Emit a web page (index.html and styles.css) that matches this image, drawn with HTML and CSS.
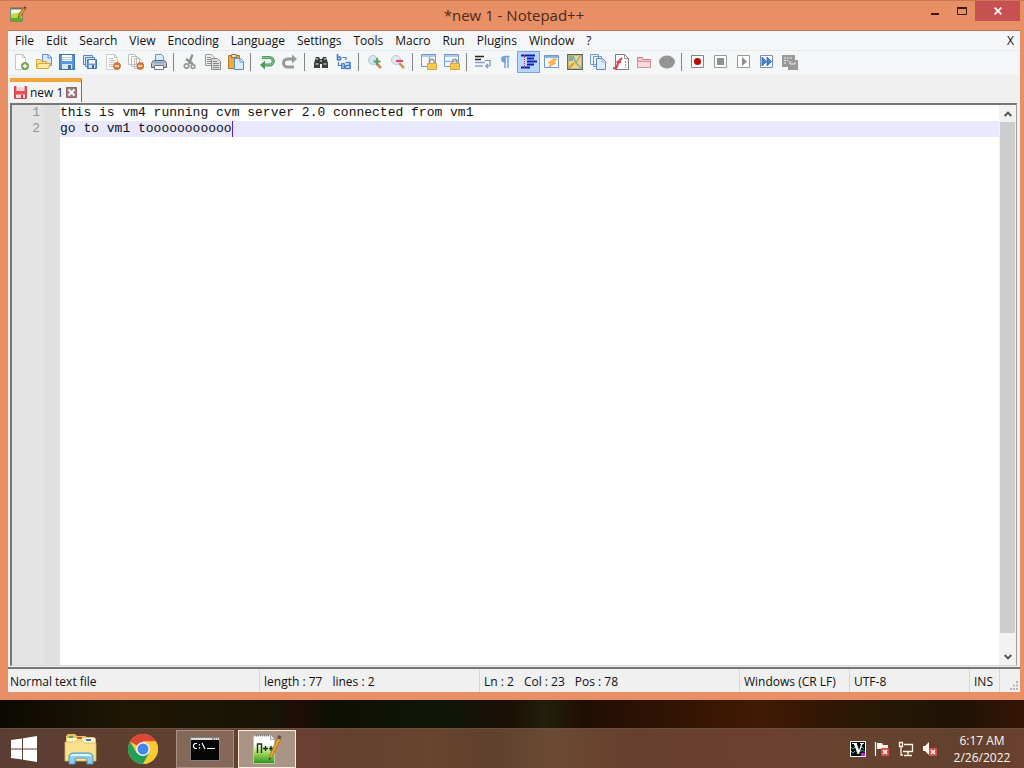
FILE: index.html
```
<!DOCTYPE html>
<html lang="en">
<head>
    <meta charset="UTF-8">
    <meta name="viewport" content="width=device-width, initial-scale=1.0">
    <title>*new 1 - Notepad++</title>
    <link rel="stylesheet" href="styles.css">
</head>
<body>
    <main class="window">
        <header class="titlebar">
            <div class="title-icon">
                <svg width="18" height="18" viewBox="0 0 18 18"><path d="M1.500 2.500h12v13h-12z" fill="#f4f8e8" stroke="#7d8870"/><path d="M2 8l11-2v9H2z" fill="#b5df4a"/><path d="M2 12h11v3H2z" fill="#5fae24"/><path d="M2 1v3M4 1v3M6 1v3M8 1v3M10 1v3M12 1v3" stroke="#555" stroke-width=".8"/><path d="M9 12l1-4 5-7 2 1-5 8z" fill="#dca32e" stroke="#7b4b18" stroke-width=".7"/><path d="M14.500 2l1-1.500 2 1-1 1.500z" fill="#6e3030"/></svg>
            </div>
            <h1>*new 1 - Notepad++</h1>
            <div class="window-buttons">
                <button type="button" title="Minimize"><svg width="10" height="10" viewBox="0 0 10 10"><path d="M1 7h8v2H1z" fill="#3a1a0c"/></svg></button>
                <button type="button" title="Maximize"><svg width="10" height="8" viewBox="0 0 10 8"><path d="M.5 1h9v6.500h-9z" fill="none" stroke="#3a1a0c"/><path d="M0 0h10v2H0z" fill="#3a1a0c"/></svg></button>
                <button type="button" class="close" title="Close"><svg width="8" height="8" viewBox="0 0 8 8"><path d="M.7.7l6.600 6.600M7.300.7L.7 7.300" stroke="#fff" stroke-width="1.700"/></svg></button>
            </div>
        </header>

        <div class="client">
            <nav class="menubar">
                <button type="button">File</button>
                <button type="button">Edit</button>
                <button type="button">Search</button>
                <button type="button">View</button>
                <button type="button">Encoding</button>
                <button type="button">Language</button>
                <button type="button">Settings</button>
                <button type="button">Tools</button>
                <button type="button">Macro</button>
                <button type="button">Run</button>
                <button type="button">Plugins</button>
                <button type="button">Window</button>
                <button type="button">?</button>
                <button type="button" class="menu-close">X</button>
            </nav>

            <div class="toolbar">
                <button type="button" title="New"><svg viewBox="0 0 16 16"><path d="M2.500.5h7l3 3v12h-10z" fill="#fff" stroke="#c6c6c6"/><path d="M9.500.5v3h3" fill="none" stroke="#c6c6c6"/><circle cx="12" cy="12" r="3.600" fill="#7fa650" stroke="#5c7d3a" stroke-width=".7"/><path d="M12 9.800v4.400M9.800 12h4.400" stroke="#fff" stroke-width="1.300"/></svg></button>
                <button type="button" title="Open"><svg viewBox="0 0 16 16"><path d="M6.500.5h6l3 3v8h-9z" fill="#d8e8fc" stroke="#6a92c8"/><path d="M12 .5v3.500h3.500" fill="none" stroke="#6a92c8"/><path d="M.5 14.500v-9h4l1 2h5v3" fill="#fbe08e" stroke="#d8a53a"/><path d="M.5 14.500l2-5h12l-2 5z" fill="#fde9a0" stroke="#d8a53a"/></svg></button>
                <button type="button" title="Save"><svg viewBox="0 0 16 16"><path d="M.7.7h14.600v14.600H.7z" fill="#5a9be0" stroke="#3f74bd" stroke-width="1.400"/><path d="M3 1h10v6H3z" fill="#fff"/><path d="M3 3.500h10M3 5.500h10" stroke="#b8d0ee"/><path d="M3 10h10v5H3z" fill="#d6e6e8"/><path d="M9 11h3v4H9z" fill="#4370a8"/></svg></button>
                <button type="button" title="Save All"><svg viewBox="0 0 16 16"><path d="M1.500 1.500h9v9h-9z" fill="#d3e3f8" stroke="#5c85be"/><path d="M3.500 3.500h9v9h-9z" fill="#d3e3f8" stroke="#5c85be"/><path d="M5.500 5.500h9v9h-9z" fill="#6e9fdc" stroke="#4f78b2"/><path d="M7 6h6v3.500H7z" fill="#fff"/><path d="M7 11h6v3H7z" fill="#d9e8ea"/><path d="M10 11h2v3h-2z" fill="#4069a0"/></svg></button>
                <button type="button" title="Close"><svg viewBox="0 0 16 16"><path d="M1.500.5h8l3 3v12h-11z" fill="#fff" stroke="#cfcfcf"/><path d="M9.500.5v3h3M4 4.500h4M4 6.500h6M4 8.500h5M4 10.500h4M4 12.500h4" fill="none" stroke="#bdbdbd"/><circle cx="12" cy="12" r="3.500" fill="#e67a2c" stroke="#b85a1a" stroke-width=".7"/><path d="M10 12h4" stroke="#fff" stroke-width="1.300"/></svg></button>
                <button type="button" title="Close All"><svg viewBox="0 0 16 16"><path d="M.5.5h6l2 2v8h-8zM3.500 2.500h6l2 2v8h-8zM6.500 4.500h5l3 3v7h-8z" fill="#fff" stroke="#bdbdbd"/><circle cx="12.300" cy="12" r="3.400" fill="#e67a2c" stroke="#b85a1a" stroke-width=".7"/><path d="M10.300 12h4" stroke="#fff" stroke-width="1.300"/></svg></button>
                <button type="button" title="Print"><svg viewBox="0 0 16 16"><path d="M4.500.5h6l2 2v6h-8z" fill="#dceaff" stroke="#6f8fc8"/><path d="M1.500 7.500l2-1h9l2 1 1 2v4H.5v-4z" fill="#bfc3cc" stroke="#5e6472"/><path d="M3 7.500h10v2H3z" fill="#88a8e0"/><path d="M3.500 11.500h9v4h-9z" fill="#fff" stroke="#6e7482"/></svg></button>
                <span class="separator"></span>
                <button type="button" title="Cut"><svg viewBox="0 0 16 16"><path d="M10.500.5L7 10M4 5l7 5" stroke="#8e8e8e" stroke-width="2.200"/><circle cx="4.500" cy="12" r="2.200" fill="none" stroke="#9a9a9a" stroke-width="1.800"/><circle cx="11" cy="12.500" r="1.900" fill="none" stroke="#9a9a9a" stroke-width="1.600"/></svg></button>
                <button type="button" title="Copy"><svg viewBox="0 0 16 16"><path d="M.5.5h6l3 3v8h-9z" fill="#eee" stroke="#9a9a9a"/><path d="M2 3.500h4M2 5.500h5M2 7.500h5M2 9.500h5" stroke="#8f8f8f"/><path d="M6.500 4.500h6l3 3v8h-9z" fill="#ddd" stroke="#8a8a8a"/><path d="M8 7.500h4M8 9.500h6M8 11.500h6M8 13.500h6" stroke="#8a8a8a"/></svg></button>
                <button type="button" title="Paste"><svg viewBox="0 0 16 16"><path d="M.5 1.500h11v13H.5z" fill="#f0a93c" stroke="#bb7420"/><path d="M3.500.5h5v3h-5z" fill="#ddd" stroke="#8d7650"/><path d="M6.500 4.500h6l3 3v8h-9z" fill="#dcecff" stroke="#5f8dcc"/><path d="M12 4.500v3.500h3.500" fill="#fff" stroke="#5f8dcc"/></svg></button>
                <span class="separator"></span>
                <button type="button" title="Undo"><svg viewBox="0 0 16 16"><path d="M3 3.500h7.500a3.500 3.500 0 0 1 0 7.500H5" fill="none" stroke="#4d9a58" stroke-width="3"/><path d="M3 3.500h7.500a3.500 3.500 0 0 1 0 7.500H5" fill="none" stroke="#8cc894"/><path d="M6 6.500v9L1 11z" fill="#4d9a58"/></svg></button>
                <button type="button" title="Redo"><svg viewBox="0 0 16 16"><path d="M11 5H5.500a3.500 3.500 0 0 0 0 8H12" fill="none" stroke="#999" stroke-width="3"/><path d="M10 .5v9L15 5z" fill="#999"/></svg></button>
                <span class="separator"></span>
                <button type="button" title="Find"><svg viewBox="0 0 16 16"><path d="M3 3h3l1 2h2l1-2h3l2 6v5H9v-4H7v4H1V9z" fill="#3c3c3c"/><path d="M3 5h2M11 5h2M2.500 10h3M10.500 10h3M7 7h2" stroke="#b9b9b9" stroke-width="1.500"/></svg></button>
                <button type="button" title="Replace"><svg viewBox="0 0 16 16"><g fill="none" stroke="#4a7fd0" stroke-width="1.700"><path d="M1.500 0v6M1.500 3.500c4-2 5 3 0 2.500M9.500 8.500h4.500v6H9.500c-1.500-3 1-3.500 4-3"/></g><path d="M6.500 3.500H10V6M2.500 8v3.500H5" fill="none" stroke="#4a7fd0" stroke-width="1.200"/><path d="M5.500 9.500h3v5h-3z" fill="#8bb2e8" stroke="#4a7fd0"/></svg></button>
                <span class="separator"></span>
                <button type="button" title="Zoom In"><svg viewBox="0 0 16 16"><path d="M9 9l5 5" stroke="#c98b4a" stroke-width="2.600"/><circle cx="6" cy="6" r="4.500" fill="#d5e7ec" stroke="#b4c8d0"/><path d="M10 4v7M6.500 7.500h7" stroke="#5a9f60" stroke-width="2.200"/></svg></button>
                <button type="button" title="Zoom Out"><svg viewBox="0 0 16 16"><path d="M9 9l5 5" stroke="#c9965f" stroke-width="2.600"/><circle cx="6" cy="6" r="4.500" fill="#dde8f3" stroke="#bccbd9"/><path d="M6 7h7" stroke="#dc4860" stroke-width="2.200"/></svg></button>
                <span class="separator"></span>
                <button type="button" title="Synchronize Vertical Scrolling"><svg viewBox="0 0 16 16"><path d="M.5.5h14v12H.5z" fill="#f4f8ff" stroke="#7898c6"/><path d="M1 2h13M8.500 2v10" stroke="#9bb6dc" stroke-width="1.500"/><path d="M8.500 9V7.500c0-3 4.500-3 4.500 0V9" fill="none" stroke="#999" stroke-width="1.500"/><path d="M6.500 9.500h9v6h-9z" fill="#fbc84e" stroke="#dba545"/></svg></button>
                <button type="button" title="Synchronize Horizontal Scrolling"><svg viewBox="0 0 16 16"><path d="M.5.5h14v12H.5z" fill="#f4f8ff" stroke="#7898c6"/><path d="M1 2h13M1 7.500h13" stroke="#9bb6dc" stroke-width="1.500"/><path d="M8.500 9V7.500c0-3 4.500-3 4.500 0V9" fill="none" stroke="#999" stroke-width="1.500"/><path d="M6.500 9.500h9v6h-9z" fill="#fbc84e" stroke="#dba545"/></svg></button>
                <span class="separator"></span>
                <button type="button" title="Word wrap"><svg viewBox="0 0 16 16"><path d="M0 2.500h9M0 5.500h6" stroke="#222" stroke-width="1.300"/><path d="M0 8.500h10M0 12h8" stroke="#8aa4cc" stroke-width="1.500"/><path d="M10 6.500h5V12h-4M13 9.800L10.800 12l2.200 2.200" fill="none" stroke="#7792c0" stroke-width="1.200"/></svg></button>
                <button type="button" title="Show All Characters"><svg viewBox="0 0 16 16"><path d="M6.500 2.500h5M7 2v12M10 2v12" stroke="#72a0dc" stroke-width="1.500"/><path d="M7.500 2H6C2 2 2 8.500 6 8.500h1.500z" fill="#72a0dc"/></svg></button>
                <button type="button" class="pressed" title="Show Indent Guide"><svg viewBox="0 0 16 16"><path d="M0 1.500h14M6 4.500h7M6 7.500h10M6 10.500h7M0 13.500h9" stroke="#0b1dba" stroke-width="1.800"/><path d="M3.500 1v14" stroke="#c43848" stroke-dasharray="1 1"/></svg></button>
                <button type="button" title="User Defined Language"><svg viewBox="0 0 16 16"><path d="M.5 1.500h14v12H.5z" fill="#f5f9ff" stroke="#7297c8"/><path d="M1 3h13" stroke="#8fb0de" stroke-width="2"/><path d="M9 5l-5 4h3l-2 4 7-4H9l4-4z" fill="#ffbd3b" stroke="#e8942c" stroke-width=".6"/></svg></button>
                <button type="button" title="Document Map"><svg viewBox="0 0 16 16"><path d="M.7.7h14.600v14.600H.7z" fill="#efd680" stroke="#555f68" stroke-width="1.200"/><path d="M2 2h4v5H2z" fill="#84ae9a"/><path d="M6 2l3 7 5 5M9 9l4-7" stroke="#8aa8a4" stroke-width="1.500" fill="none"/><path d="M2 14l5-5" stroke="#d39e34" stroke-width="2"/></svg></button>
                <button type="button" title="Document List"><svg viewBox="0 0 16 16"><path d="M.5.5h8v10h-8zM3.500 2.500h8v10h-8z" fill="#edf4fe" stroke="#7298cd"/><path d="M6.500 4.500h6l3 3v8h-9z" fill="#e1edfe" stroke="#5c8acb"/><path d="M12 4.500V8h3.500" fill="none" stroke="#8db0df"/></svg></button>
                <button type="button" title="Function List"><svg viewBox="0 0 16 16"><path d="M2.500.5h9l4 4v11h-13z" fill="#fff" stroke="#7c7c7c"/><path d="M11.500 1v3.500H15" fill="none" stroke="#999"/><path d="M0 14l3 .5L6 7l3-3M3.500 8h4.500" fill="none" stroke="#d84459" stroke-width="2.200"/><path d="M12.500 7v7" stroke="#999" stroke-dasharray="2 1"/></svg></button>
                <button type="button" title="Folder as Workspace"><svg viewBox="0 0 16 16"><path d="M1.500 13.500v-10h5l1 2h7v8z" fill="#f3c6cc" stroke="#cf7d87"/><path d="M1.500 13.500v-6h13v6z" fill="#f9dade" stroke="#d6929b"/></svg></button>
                <button type="button" title="Monitoring"><svg viewBox="0 0 16 16"><ellipse cx="8" cy="8" rx="8" ry="6.500" fill="#959595"/><path d="M4 6h1M11 6h1" stroke="#777" stroke-width="1.500"/></svg></button>
                <span class="separator"></span>
                <button type="button" title="Start Recording"><svg viewBox="0 0 16 16"><path d="M1.500 1.500h12v12h-12z" fill="#fff" stroke="#858585"/><circle cx="7.500" cy="7.500" r="3.500" fill="#bd0606"/></svg></button>
                <button type="button" title="Stop Recording"><svg viewBox="0 0 16 16"><path d="M1.500 1.500h12v12h-12z" fill="#fff" stroke="#999"/><path d="M4 4h7v7H4z" fill="#8f8f8f"/></svg></button>
                <button type="button" title="Playback"><svg viewBox="0 0 16 16"><path d="M1.500 1.500h12v12h-12z" fill="#fff" stroke="#999"/><path d="M6 3l5 4.500L6 12z" fill="#8f8f8f"/></svg></button>
                <button type="button" title="Run a Macro Multiple Times"><svg viewBox="0 0 16 16"><path d="M1.500 1.500h12v12h-12z" fill="#fff" stroke="#7890ab"/><path d="M3 3l4.500 4.500L3 12zM8 3l4.500 4.500L8 12z" fill="#4285da" stroke="#2d62b0" stroke-width=".8"/></svg></button>
                <button type="button" title="Save Current Recorded Macro"><svg viewBox="0 0 16 16"><path d="M0 1h13v12H0z" fill="#999"/><path d="M2 4h9M2 6.500h5M2 9h3" stroke="#eee" stroke-dasharray="2 1"/><path d="M6 6h10v10H6z" fill="#999"/><path d="M8 7v3h5V8" fill="none" stroke="#eee"/></svg></button>
            </div>

            <div class="tabs">
                <div class="tab">
                    <svg width="13" height="13" viewBox="0 0 13 13"><path d="M.5.5h12v12H.5z" fill="#ee4a54" stroke="#d04550"/><path d="M2.500 0h8v5h-8z" fill="#fff"/><path d="M3.500 2h6M3.500 4h6" stroke="#e5a9ad"/><path d="M2 8.500h9V12H2z" fill="#f4d7d8"/><path d="M7 9h2v3H7z" fill="#cc3c45"/></svg>
                    <span>new 1</span>
                    <button type="button" title="Close tab"><svg width="11" height="11" viewBox="0 0 11 11"><path d="M.5.5h10v10H.5z" fill="#9a7c80" stroke="#8b6467"/><path d="M2.500 2.500l6 6M8.500 2.500l-6 6" stroke="#fff" stroke-width="2"/></svg></button>
                </div>
            </div>

            <div class="editor">
                <ol class="line-numbers">
                    <li>1</li>
                    <li>2</li>
                </ol>
                <div class="fold-margin"></div>
                <div class="text-area">
                    <textarea aria-label="Document" spellcheck="false">this is vm4 running cvm server 2.0 connected from vm1
go to vm1 tooooooooooo</textarea>
                    <span class="caret"></span>
                </div>
                <div class="scrollbar">
                    <button type="button" title="Scroll up"><svg width="8" height="6" viewBox="0 0 8 6"><path d="M.7 5L4 1.700 7.300 5" fill="none" stroke="#505050" stroke-width="1.900"/></svg></button>
                    <div class="track"><div class="thumb"></div></div>
                    <button type="button" title="Scroll down"><svg width="8" height="6" viewBox="0 0 8 6"><path d="M.7 1L4 4.300 7.300 1" fill="none" stroke="#505050" stroke-width="1.900"/></svg></button>
                </div>
            </div>

            <footer class="statusbar">
                <div class="doc-type">Normal text file</div>
                <div class="doc-size"><span>length : 77</span><span>lines : 2</span></div>
                <div class="cursor-pos"><span>Ln : 2</span><span>Col : 23</span><span>Pos : 78</span></div>
                <div class="eol">Windows (CR LF)</div>
                <div class="encoding">UTF-8</div>
                <div class="typing-mode">INS</div>
                <div class="grip"><svg width="10" height="10" viewBox="0 0 10 10"><path d="M7 0h2v2H7zM4 3.500h2v2H4zM7 3.500h2v2H7zM1 7h2v2H1zM4 7h2v2H4zM7 7h2v2H7z" fill="#b5b5b5"/></svg></div>
            </footer>
        </div>
    </main>

    <footer class="taskbar">
        <button type="button" class="start" title="Start"><svg width="26" height="26" viewBox="0 0 26 26"><path d="M0 4l11-1.600V12.500H0zM12 2.200L26 0v12.500H12zM0 13.500h11v10.100L0 22zM12 13.500h14V26l-14-2.200z" fill="#fff"/></svg></button>
        <button type="button" class="task" title="File Explorer">
            <svg width="34" height="32" viewBox="0 0 34 32"><path d="M2 3l2-2h7l2 2h8l2 1h7l2 2v22H2z" fill="#e8c564"/><path d="M3 5h28v5H3z" fill="#fff4c8"/><path d="M5 3h4v2H5z" fill="#59a548"/><path d="M13 4h5v2h-5z" fill="#d34c35"/><path d="M22 6h5v2h-5z" fill="#367fc4"/><path d="M1 9h10l2-2h5l2 3h12v18H1z" fill="#f8e28e" stroke="#d9b759" stroke-width=".8"/><path d="M5 31v-7q0-4 5-4h14q5 0 5 4v7h-6v-4q0-2-2-2h-8q-2 0-2 2v4z" fill="#91cdef" stroke="#4b98c8"/><path d="M7 23q1-1 4-1h12q3 0 4 1" fill="none" stroke="#dff5ff" stroke-width="2"/></svg>
        </button>
        <button type="button" class="task" title="Google Chrome">
            <svg width="30" height="30" viewBox="0 0 30 30"><circle cx="15" cy="15" r="15" fill="#fbc934"/><path d="M15 15L2 7.500A15 15 0 0 1 28 7.500H15z" fill="#dd4536"/><path d="M2 7.500L8.500 18.750 15 22l6.500-3.250L15 30A15 15 0 0 1 2 7.500z" fill="#239d58"/><path d="M21.500 18.750L15 30A15 15 0 0 0 28 7.500H15z" fill="#fbc934"/><circle cx="15" cy="15" r="7" fill="#f4f4f4"/><circle cx="15" cy="15" r="5.500" fill="#4384ef"/></svg>
        </button>
        <button type="button" class="task running" title="Command Prompt">
            <svg width="30" height="24" viewBox="0 0 30 24"><path d="M.5.5h29v23H.5z" fill="#050505" stroke="#818181"/><path d="M1 1h28v2H1z" fill="#ddd"/><path d="M22 2h2M25 2h1M27 2h1" stroke="#555"/><path d="M7 6.500H5L3.500 8v2L5 11.500h2M9.500 7v1.500M9.500 10v1.500M12 6l3 6M17 11.500h8" fill="none" stroke="#fff" stroke-width="1.200"/></svg>
        </button>
        <button type="button" class="task running active" title="Notepad++">
            <svg width="32" height="32" viewBox="0 0 32 32"><defs><linearGradient id="page" x1="0" y1="0" x2="0" y2="1"><stop offset=".3" stop-color="#fff"/><stop offset=".6" stop-color="#a7df62"/><stop offset="1" stop-color="#299119"/></linearGradient></defs><path d="M2.500 2.500h17l4 4v24h-21z" fill="url(#page)" stroke="#b8ccab"/><path d="M19.500 2.500v4h4" fill="#eee" stroke="#aaa"/><path d="M3 2.500h16" stroke="#777" stroke-width="2" stroke-dasharray="1 1"/><path d="M6.500 20v-9h4v9M12 15.500h5M14.500 13v5M18 15.500h4M20 13v5" fill="none" stroke="#202820" stroke-width="1.400"/><path d="M18 27l1-5L27 4l3 2-9 18z" fill="#e3a235" stroke="#a86d20" stroke-width=".8"/><path d="M26 5l1.500-3 3 1.500L29 6.500z" fill="#744d42"/><path d="M18 27l.5-2.500 2 1z" fill="#333"/></svg>
        </button>
        <div class="tray">
            <button type="button" title="VNC Server"><svg viewBox="0 0 16 16"><path d="M.5.5h15v15H.5z" fill="#080808" stroke="#fff"/><path d="M1 6l2 2 2-2M1 10l2 2 2-2M10 8l2-2 2 2M10 11l2-2 3 2" fill="none" stroke="#28b99c"/><path d="M2 2.500h5M10 2.500h4" stroke="#fff"/><path d="M3.500 2h3l2.500 7 2.500-7H13L9 13H7.500z" fill="#fff"/><path d="M11 12h4v3h-4z" fill="#d31cec"/></svg></button>
            <button type="button" title="Action Center"><svg viewBox="0 0 16 16"><path d="M1.500 1v14" stroke="#fff" stroke-width="1.200"/><path d="M3 2h5l1 2h5v6H8L7 8H3z" fill="#fff2e9"/><path d="M7 7h8v8H7z" fill="#d94c4c"/><path d="M9 9l4 4M13 9l-4 4" stroke="#fff" stroke-width="1.600"/></svg></button>
            <button type="button" title="Network"><svg viewBox="0 0 16 16"><path d="M6 3.500h8.500v7H5M10 11v3M6 14.500h8M3 6v8h2" fill="none" stroke="#fff4e5" stroke-width="1.300"/><path d="M1.500 1.500h3v4h-3z" fill="none" stroke="#fff4e5" stroke-width="1.300"/></svg></button>
            <button type="button" title="Volume"><svg viewBox="0 0 16 16"><path d="M1 5h2l4-4v13l-4-4H1z" fill="#fff4e9"/><path d="M7 7h8v8H7z" fill="#d94c4c"/><path d="M9 9l4 4M13 9l-4 4" stroke="#fff" stroke-width="1.600"/></svg></button>
        </div>
        <div class="clock">
            <time>6:17 AM</time>
            <time>2/26/2022</time>
        </div>
    </footer>
</body>
</html>
```

FILE: styles.css
```
* {
    box-sizing: border-box;
}

body {
    margin: 0;
    height: 100vh;
    display: flex;
    flex-direction: column;
    overflow: hidden;
    font-family: "Open Sans", "Segoe UI", sans-serif;
    font-size: 12px;
    color: #111;
    background: linear-gradient(90deg, #0c0903 0%, #1e1703 12%, #171404 27%, #210c06 29%, #0f1005 32%, #10150a 44%, #1c1005 50%, #20200a 53%, #210e03 57%, #401a04 74%, #331704 80%, #241704 87%, #201305 94%, #361404 100%);
}

button {
    margin: 0;
    padding: 0;
    border: none;
    background: none;
    color: inherit;
    font: inherit;
    display: flex;
    align-items: center;
    justify-content: center;
}

svg {
    display: block;
}

/* Window */
.window {
    flex: 1;
    min-height: 0;
    margin-bottom: 28px;
    padding: 0 4px 8px 8px;
    display: flex;
    flex-direction: column;
    background-color: #e88f66;
    border-top: 1px solid #c87855;
}

.titlebar {
    height: 29px;
    display: grid;
    grid-template-columns: 1fr auto 1fr;
}

.title-icon {
    padding: 5px 0 0 1px;
}

h1 {
    margin: 0;
    font-size: 15px;
    font-weight: normal;
    line-height: 29px;
    color: #4d2a1b;
}

.window-buttons {
    display: flex;
    justify-content: flex-end;
}

.window-buttons button {
    width: 27px;
    height: 20px;
}

.window-buttons .close {
    width: 45px;
    background-color: #c75050;
}

.client {
    flex: 1;
    min-height: 0;
    display: flex;
    flex-direction: column;
    background-color: #f0f0f0;
    border-top: 1px solid #bc7458;
}

/* Menu */
.menubar {
    display: flex;
    height: 19px;
    padding-left: 1px;
    background-color: #f5f6f7;
}

.menubar button {
    padding: 0 6px;
}

.menubar .menu-close {
    margin-left: auto;
}

/* Toolbar */
.toolbar {
    display: flex;
    height: 24px;
    padding: 0 1px;
    background-color: #f4f7f8;
    border-top: 1px solid #eaebec;
}

.toolbar button {
    width: 23px;
    height: 22px;
}

.toolbar svg,
.tray svg {
    width: 16px;
    height: 16px;
}

.toolbar .pressed {
    background-color: #b9d7fc;
    border: 1px solid #6ea6e8;
}

.separator {
    width: 1px;
    height: 18px;
    margin: 2px 4px 0 3px;
    background-color: #858585;
}

/* Tabs */
.tabs {
    display: flex;
    height: 29px;
    padding: 4px 2px 1px;
}

.tab {
    display: flex;
    align-items: center;
    gap: 3px;
    padding: 0 4px 0 4px;
    border-top: 4px solid #f5a33b;
    border-right: 1px solid #6e6e6e;
    background-color: #f5f5f5;
}

/* Editor */
.editor {
    flex: 1;
    min-height: 0;
    display: flex;
    margin: 0 3px 0 2px;
    border: 2px solid #777;
    border-right: 1px solid #a0a0a0;
    border-bottom: 1px solid #d8d8d8;
    background-color: #fff;
    font-family: "Liberation Mono", "Courier New", monospace;
    font-size: 13px;
    line-height: 16px;
}

.line-numbers {
    width: 32px;
    margin: 0;
    padding: 0 4px 0 0;
    list-style: none;
    text-align: right;
    color: #959595;
    background-color: #e4e4e4;
}

.fold-margin {
    width: 16px;
    background-color: #e0e0e0;
}

.text-area {
    position: relative;
    flex: 1;
}

textarea {
    display: block;
    width: 100%;
    height: 100%;
    margin: 0;
    padding: 0;
    border: none;
    outline: none;
    resize: none;
    overflow: hidden;
    font: inherit;
    color: #111;
    /* current line highlight */
    background: linear-gradient(#e8e8ff, #e8e8ff) 0 16px / 100% 16px no-repeat #fff;
}

.caret {
    position: absolute;
    left: 22ch;
    top: 16px;
    width: 1px;
    height: 16px;
    background-color: #5a20d0;
}

.scrollbar {
    width: 17px;
    display: flex;
    flex-direction: column;
    padding: 0 1px;
    background-color: #f0f2f3;
}

.scrollbar button {
    height: 17px;
}

.track {
    flex: 1;
    padding-bottom: 15px;
}

.thumb {
    height: 100%;
    background-color: #cdcdcd;
}

/* Status bar */
.statusbar {
    display: flex;
    height: 25px;
    margin-top: 1px;
    border-top: 2px solid #777;
    line-height: 26px;
    white-space: nowrap;
}

.statusbar div {
    padding-left: 4px;
    border-right: 1px solid #d7d7d7;
}

.statusbar .doc-type {
    flex: 1;
    padding-left: 2px;
}

.doc-size,
.cursor-pos {
    display: flex;
    gap: 10px;
}

.doc-size {
    width: 220px;
}

.cursor-pos {
    width: 260px;
}

.eol {
    width: 110px;
}

.encoding {
    width: 120px;
}

.typing-mode {
    width: 30px;
}

.statusbar .grip {
    width: 20px;
    padding: 0 1px 1px 0;
    border: none;
    display: flex;
    align-items: flex-end;
    justify-content: flex-end;
}

/* Taskbar */
.taskbar {
    height: 40px;
    display: flex;
    align-items: center;
    gap: 4px;
    padding-right: 6px;
    background: linear-gradient(90deg, #5b3d33 0%, #60402f 18%, #6b4033 30%, #62412f 34%, #67452f 42%, #5f402c 48%, #6b4b35 54%, #663f2d 62%, #6c4030 75%, #66432f 83%, #62412e 93%, #6b402f 100%);
    border-top: 1px solid #6b5040;
}

.start {
    width: 48px;
    height: 38px;
}

.task {
    width: 58px;
    height: 38px;
}

.task.running {
    background-color: #846759;
    border: 1px solid #aa9082;
}

.task.active {
    background-color: #aa9486;
    border-color: #fff0d8;
}

.tray {
    display: flex;
    margin-left: auto;
}

.tray button {
    width: 24px;
    height: 38px;
}

.clock {
    width: 72px;
    display: flex;
    flex-direction: column;
    align-items: center;
    line-height: 17px;
    color: #fff4ec;
}
```
